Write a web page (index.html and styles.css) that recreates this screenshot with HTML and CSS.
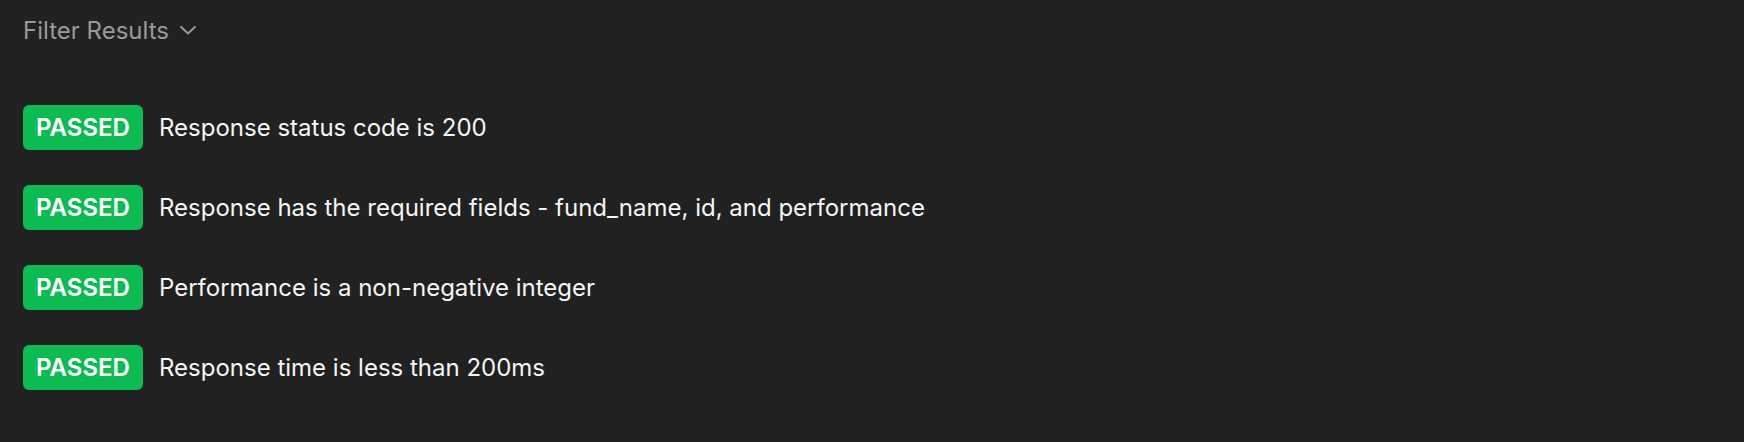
FILE: index.html
```html
<!DOCTYPE html>
<html>
<head>
<meta charset="utf-8">
<link rel="stylesheet" href="styles.css">
</head>
<body>
<div class="panel">
  <div class="filter">
    <span class="filter-label">Filter Results</span>
    <svg class="chevron" width="18" height="10" viewBox="0 0 18 10"><path d="M1.5 1.5 L9 8.5 L16.5 1.5" fill="none" stroke="#9a9a9a" stroke-width="2"/></svg>
  </div>
  <ul class="results">
    <li class="row"><span class="badge">PASSED</span><span class="name">Response status code is 200</span></li>
    <li class="row"><span class="badge">PASSED</span><span class="name">Response has the required fields - fund_name, id, and performance</span></li>
    <li class="row"><span class="badge">PASSED</span><span class="name">Performance is a non-negative integer</span></li>
    <li class="row"><span class="badge">PASSED</span><span class="name">Response time is less than 200ms</span></li>
  </ul>
</div>
</body>
</html>
```
FILE: styles.css
```css
html, body {
  margin: 0;
  padding: 0;
  background: #212121;
  height: 100%;
}
body {
  font-family: Inter, "Noto Sans", sans-serif;
  color: #f2f2f2;
}
.panel {
  padding: 14px 23px 0 23px;
}
.filter {
  display: flex;
  align-items: center;
  gap: 10px;
  height: 32px;
  color: #9a9a9a;
  font-size: 24px;
}
.results {
  list-style: none;
  margin: 59px 0 0 0;
  padding: 0;
  display: flex;
  flex-direction: column;
  gap: 35px;
}
.row {
  display: flex;
  align-items: center;
  gap: 16px;
  height: 45px;
}
.badge {
  display: flex;
  align-items: center;
  justify-content: center;
  width: 120px;
  height: 45px;
  border-radius: 6px;
  background: #0dbb53;
  color: #ffffff;
  font-weight: 600;
  font-size: 24px;
}
.name {
  font-size: 24px;
  color: #f5f5f5;
}
```
